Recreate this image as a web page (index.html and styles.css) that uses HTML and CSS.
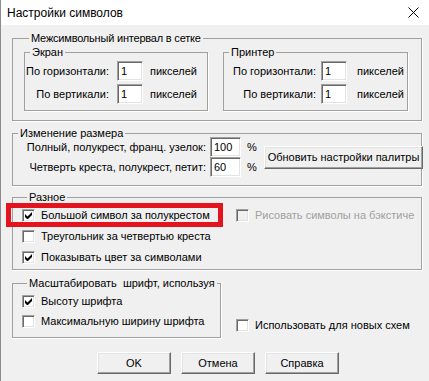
FILE: index.html
```html
<!DOCTYPE html>
<html lang="ru">
<head>
  <meta charset="UTF-8" />
  <title>Настройки символов</title>
  <link rel="stylesheet" href="styles.css">
</head>
<body>
  <div class="window">
    <div class="titlebar">
      <span class="title">Настройки символов</span>
      <svg class="close" width="11" height="11" viewBox="0 0 11 11">
        <path d="M0.5 0.5 L10.5 10.5 M10.5 0.5 L0.5 10.5" stroke="#000" stroke-width="1" fill="none"/>
      </svg>
    </div>

    <div class="dialog">
      <fieldset class="group g-spacing">
        <legend>Межсимвольный интервал в сетке</legend>
        <div class="panes">
          <fieldset class="group pane pane-screen">
            <legend>Экран</legend>
            <div class="field"><label>По горизонтали:</label><span class="edit">1</span><span class="unit">пикселей</span></div>
            <div class="field"><label>По вертикали:</label><span class="edit">1</span><span class="unit">пикселей</span></div>
          </fieldset>
          <fieldset class="group pane pane-printer">
            <legend>Принтер</legend>
            <div class="field"><label>По горизонтали:</label><span class="edit">1</span><span class="unit">пикселей</span></div>
            <div class="field"><label>По вертикали:</label><span class="edit">1</span><span class="unit">пикселей</span></div>
          </fieldset>
        </div>
      </fieldset>

      <fieldset class="group g-resize">
        <legend>Изменение размера</legend>
        <div class="resize-row">
          <div class="resize-fields">
            <div class="field"><label>Полный, полукрест, франц. узелок:</label><span class="edit edit-wide">100</span><span class="unit">%</span></div>
            <div class="field"><label>Четверть креста, полукрест, петит:</label><span class="edit edit-wide">60</span><span class="unit">%</span></div>
          </div>
          <button class="btn btn-wide">Обновить настройки палитры</button>
        </div>
      </fieldset>

      <fieldset class="group g-misc">
        <legend>Разное</legend>
        <div class="misc-grid">
          <div class="check"><span class="box"><svg width="7" height="7" viewBox="0 0 7 7"><path d="M0 2 L2.5 4.5 L7 0 L7 3 L2.5 7.5 L0 5 Z" fill="#000"/></svg></span>Большой символ за полукрестом</div>
          <div class="check disabled"><span class="box"></span>Рисовать символы на бэкстиче</div>
          <div class="check"><span class="box"></span>Треугольник за четвертью креста</div>
          <div></div>
          <div class="check"><span class="box"><svg width="7" height="7" viewBox="0 0 7 7"><path d="M0 2 L2.5 4.5 L7 0 L7 3 L2.5 7.5 L0 5 Z" fill="#000"/></svg></span>Показывать цвет за символами</div>
          <div class="highlight"></div>
        </div>
      </fieldset>

      <div class="bottom-row">
        <fieldset class="group g-scale">
          <legend>Масштабировать &nbsp;шрифт, используя</legend>
          <div class="check"><span class="box"><svg width="7" height="7" viewBox="0 0 7 7"><path d="M0 2 L2.5 4.5 L7 0 L7 3 L2.5 7.5 L0 5 Z" fill="#000"/></svg></span>Высоту шрифта</div>
          <div class="check"><span class="box"></span>Максимальную ширину шрифта</div>
        </fieldset>
        <div class="check new-schemes"><span class="box"></span>Использовать для новых схем</div>
      </div>

      <div class="buttons">
        <button class="btn">OK</button>
        <button class="btn">Отмена</button>
        <button class="btn">Справка</button>
      </div>
    </div>
  </div>
</body>
</html>
```

FILE: styles.css
```css
* {
  box-sizing: border-box;
}

body {
  margin: 0;
  width: 429px;
  height: 381px;
  overflow: hidden;
  background-color: #f0f0f0;
  font-family: "Liberation Sans", Arial, sans-serif;
  font-size: 11px;
  color: #000;
}

.window {
  height: 381px;
  border-left: 1px solid #8c8c8c;
  display: flex;
  flex-direction: column;
}

.titlebar {
  height: 25px;
  flex: none;
  background-color: #fff;
  display: flex;
  align-items: center;
  justify-content: space-between;
  padding: 0 10px 0 6px;
  font-size: 12px;
}

.close {
  display: block;
}

.dialog {
  display: flex;
  flex-direction: column;
  padding: 6px 0 0 11px;
}

/* group boxes */
.group {
  margin: 0;
  padding: 0;
  min-width: 0;
  border: 1px solid #a0a0a0;
  box-shadow: 1px 1px 0 #fff;
}

.group > legend {
  padding: 0 2px;
  margin-left: 5px;
  line-height: 14px;
}

.g-spacing {
  width: 410px;
  padding: 0 13px 9px 11px;
}

.g-spacing > legend {
  letter-spacing: -0.2px;
}

.panes {
  display: flex;
  gap: 15px;
}

.pane {
  flex: none;
  padding: 2px 0 6px;
}

.pane-screen {
  width: 184px;
}

.pane-printer {
  width: 185px;
}

.field {
  display: flex;
  align-items: center;
  height: 20px;
}

.field + .field {
  margin-top: 3px;
}

.field label {
  display: flex;
  justify-content: flex-end;
  white-space: nowrap;
  flex: none;
}

.pane-screen label {
  width: 84px;
  margin-right: 8px;
}

.pane-screen .unit {
  margin-left: 7px;
}

.pane-printer label {
  width: 92px;
  margin-right: 5px;
}

.pane-printer .unit {
  margin-left: 10px;
}

.edit {
  flex: none;
  width: 26px;
  height: 20px;
  padding-left: 3px;
  line-height: 18px;
  background-color: #fff;
  border: 1px solid;
  border-color: #a0a0a0 #fff #fff #a0a0a0;
  box-shadow: inset 1px 1px 0 #696969, inset -1px -1px 0 #e3e3e3;
}

.edit-wide {
  width: 31px;
}

/* resize group */
.g-resize {
  width: 410px;
  margin-top: 5px;
  padding: 0 0 8px 0;
}

.resize-row {
  display: flex;
  align-items: center;
  margin-top: -3px;
}

.resize-fields .field + .field {
  margin-top: 0;
}

.resize-fields label {
  width: 193px;
  margin-right: 4px;
}

.resize-fields .unit {
  width: 7px;
  margin-left: 6px;
}

.btn {
  flex: none;
  width: 74px;
  height: 22px;
  padding: 0;
  font: inherit;
  color: #000;
  background-color: #f0f0f0;
  border: 1px solid;
  border-color: #fff #696969 #696969 #fff;
  box-shadow: inset -1px -1px 0 #a0a0a0, inset 1px 1px 0 #e3e3e3;
}

.btn-wide {
  width: 159px;
  height: 23px;
  margin-left: 10px;
}

/* misc group */
.g-misc {
  width: 410px;
  margin-top: 4px;
  padding: 3px 0 4px 9px;
}

.misc-grid {
  position: relative;
  display: grid;
  grid-template-columns: 214px 1fr;
  row-gap: 5px;
}

.check {
  display: flex;
  align-items: center;
  gap: 6px;
  height: 16px;
  white-space: nowrap;
}

.box {
  flex: none;
  width: 13px;
  height: 13px;
  display: flex;
  align-items: center;
  justify-content: center;
  background-color: #fff;
  border: 1px solid;
  border-color: #a0a0a0 #fff #fff #a0a0a0;
  box-shadow: inset 1px 1px 0 #696969, inset -1px -1px 0 #e3e3e3;
}

.check.disabled {
  color: #a0a0a0;
}

.check.disabled .box {
  background-color: #f0f0f0;
}

.highlight {
  position: absolute;
  left: -16px;
  top: -4px;
  width: 217px;
  height: 24px;
  border: 5px solid #e3141e;
}

/* bottom */
.bottom-row {
  display: flex;
  align-items: flex-end;
  margin-top: 6px;
}

.g-scale {
  flex: none;
  width: 209px;
  padding: 3px 0 8px 9px;
}

.g-scale .check + .check {
  margin-top: 4px;
}

.new-schemes {
  margin-left: 15px;
  margin-bottom: 5px;
}

.buttons {
  display: flex;
  gap: 10px;
  margin-top: 14px;
  padding-left: 85px;
}
```
